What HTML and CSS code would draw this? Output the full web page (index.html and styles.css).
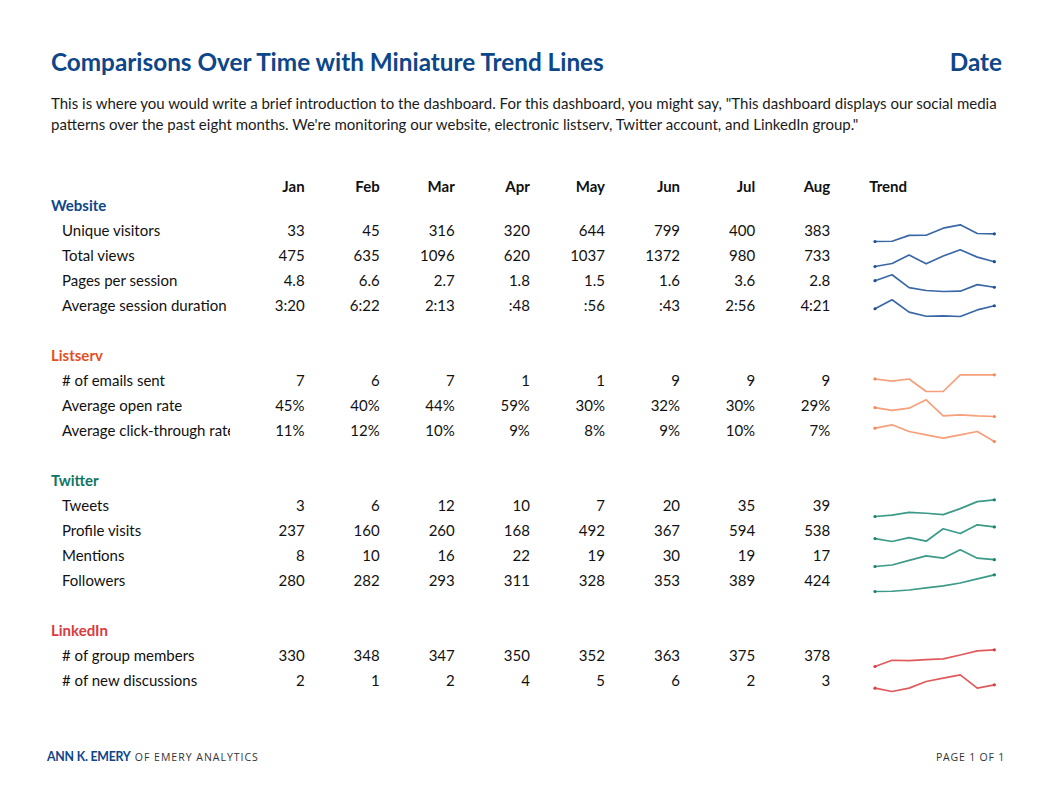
FILE: index.html
```html
<!DOCTYPE html>
<html lang="en">
<head>
<meta charset="utf-8">
<title>Comparisons Over Time with Miniature Trend Lines</title>
<link rel="stylesheet" href="styles.css">
</head>
<body>
<div class="page">
  <header class="top">
    <h1 class="title">Comparisons Over Time with Miniature Trend Lines</h1>
    <div class="date">Date</div>
  </header>
  <p class="intro">This is where you would write a brief introduction to the dashboard. For this dashboard, you might say, "This dashboard displays our social media patterns over the past eight months. We're monitoring our website, electronic listserv, Twitter account, and LinkedIn group."</p>

  <div class="grid">
    <div class="hd"></div>
    <div class="hd num">Jan</div><div class="hd num">Feb</div><div class="hd num">Mar</div><div class="hd num">Apr</div><div class="hd num">May</div><div class="hd num">Jun</div><div class="hd num">Jul</div><div class="hd num">Aug</div>
    <div class="hd trend">Trend</div>

    <div class="sec web">Website</div>

    <div class="lab">Unique visitors</div>
    <div class="num">33</div><div class="num">45</div><div class="num">316</div><div class="num">320</div><div class="num">644</div><div class="num">799</div><div class="num">400</div><div class="num">383</div>
    <div class="trend"><svg class="spark blue" width="130" height="25"><polyline points="6,23.5 23.05,23.24 40.1,17.33 57.15,17.24 74.2,10.18 91.25,6.8 108.3,15.5 125.35,15.87"/><circle cx="6" cy="23.5" r="1.6"/><circle cx="125.35" cy="15.87" r="1.6"/></svg></div>

    <div class="lab">Total views</div>
    <div class="num">475</div><div class="num">635</div><div class="num">1096</div><div class="num">620</div><div class="num">1037</div><div class="num">1372</div><div class="num">980</div><div class="num">733</div>
    <div class="trend"><svg class="spark blue" width="130" height="25"><polyline points="6,23.5 23.05,20.52 40.1,11.94 57.15,20.8 74.2,13.04 91.25,6.8 108.3,14.1 125.35,18.7"/><circle cx="6" cy="23.5" r="1.6"/><circle cx="125.35" cy="18.7" r="1.6"/></svg></div>

    <div class="lab">Pages per session</div>
    <div class="num">4.8</div><div class="num">6.6</div><div class="num">2.7</div><div class="num">1.8</div><div class="num">1.5</div><div class="num">1.6</div><div class="num">3.6</div><div class="num">2.8</div>
    <div class="trend"><svg class="spark blue" width="130" height="25"><polyline points="6,12.69 23.05,6.8 40.1,19.57 57.15,22.52 74.2,23.5 91.25,23.17 108.3,16.62 125.35,19.24"/><circle cx="6" cy="12.69" r="1.6"/><circle cx="125.35" cy="19.24" r="1.6"/></svg></div>

    <div class="lab">Average session duration</div>
    <div class="num">3:20</div><div class="num">6:22</div><div class="num">2:13</div><div class="num">:48</div><div class="num">:56</div><div class="num">:43</div><div class="num">2:56</div><div class="num">4:21</div>
    <div class="trend"><svg class="spark blue" width="130" height="25"><polyline points="6,15.77 23.05,6.8 40.1,19.07 57.15,23.25 74.2,22.86 91.25,23.5 108.3,16.95 125.35,12.76"/><circle cx="6" cy="15.77" r="1.6"/><circle cx="125.35" cy="12.76" r="1.6"/></svg></div>

    <div class="gap"></div>

    <div class="sec lst">Listserv</div>

    <div class="lab"># of emails sent</div>
    <div class="num">7</div><div class="num">6</div><div class="num">7</div><div class="num">1</div><div class="num">1</div><div class="num">9</div><div class="num">9</div><div class="num">9</div>
    <div class="trend"><svg class="spark orange" width="130" height="25"><polyline points="6,10.97 23.05,13.06 40.1,10.97 57.15,23.5 74.2,23.5 91.25,6.8 108.3,6.8 125.35,6.8"/><circle cx="6" cy="10.97" r="1.6"/><circle cx="125.35" cy="6.8" r="1.6"/></svg></div>

    <div class="lab">Average open rate</div>
    <div class="num">45%</div><div class="num">40%</div><div class="num">44%</div><div class="num">59%</div><div class="num">30%</div><div class="num">32%</div><div class="num">30%</div><div class="num">29%</div>
    <div class="trend"><svg class="spark orange" width="130" height="25"><polyline points="6,14.59 23.05,17.38 40.1,15.15 57.15,6.8 74.2,22.94 91.25,21.83 108.3,22.94 125.35,23.5"/><circle cx="6" cy="14.59" r="1.6"/><circle cx="125.35" cy="23.5" r="1.6"/></svg></div>

    <div class="lab">Average click-through rate</div>
    <div class="num">11%</div><div class="num">12%</div><div class="num">10%</div><div class="num">9%</div><div class="num">8%</div><div class="num">9%</div><div class="num">10%</div><div class="num">7%</div>
    <div class="trend"><svg class="spark orange" width="130" height="25"><polyline points="6,10.14 23.05,6.8 40.1,13.48 57.15,16.82 74.2,20.16 91.25,16.82 108.3,13.48 125.35,23.5"/><circle cx="6" cy="10.14" r="1.6"/><circle cx="125.35" cy="23.5" r="1.6"/></svg></div>

    <div class="gap"></div>

    <div class="sec twt">Twitter</div>

    <div class="lab">Tweets</div>
    <div class="num">3</div><div class="num">6</div><div class="num">12</div><div class="num">10</div><div class="num">7</div><div class="num">20</div><div class="num">35</div><div class="num">39</div>
    <div class="trend"><svg class="spark teal" width="130" height="25"><polyline points="6,23.5 23.05,22.11 40.1,19.33 57.15,20.25 74.2,21.64 91.25,15.61 108.3,8.66 125.35,6.8"/><circle cx="6" cy="23.5" r="1.6"/><circle cx="125.35" cy="6.8" r="1.6"/></svg></div>

    <div class="lab">Profile visits</div>
    <div class="num">237</div><div class="num">160</div><div class="num">260</div><div class="num">168</div><div class="num">492</div><div class="num">367</div><div class="num">594</div><div class="num">538</div>
    <div class="trend"><svg class="spark teal" width="130" height="25"><polyline points="6,20.54 23.05,23.5 40.1,19.65 57.15,23.19 74.2,10.72 91.25,15.53 108.3,6.8 125.35,8.95"/><circle cx="6" cy="20.54" r="1.6"/><circle cx="125.35" cy="8.95" r="1.6"/></svg></div>

    <div class="lab">Mentions</div>
    <div class="num">8</div><div class="num">10</div><div class="num">16</div><div class="num">22</div><div class="num">19</div><div class="num">30</div><div class="num">19</div><div class="num">17</div>
    <div class="trend"><svg class="spark teal" width="130" height="25"><polyline points="6,23.5 23.05,21.98 40.1,17.43 57.15,12.87 74.2,15.15 91.25,6.8 108.3,15.15 125.35,16.67"/><circle cx="6" cy="23.5" r="1.6"/><circle cx="125.35" cy="16.67" r="1.6"/></svg></div>

    <div class="lab">Followers</div>
    <div class="num">280</div><div class="num">282</div><div class="num">293</div><div class="num">311</div><div class="num">328</div><div class="num">353</div><div class="num">389</div><div class="num">424</div>
    <div class="trend"><svg class="spark teal" width="130" height="25"><polyline points="6,23.5 23.05,23.27 40.1,21.99 57.15,19.9 74.2,17.93 91.25,15.03 108.3,10.86 125.35,6.8"/><circle cx="6" cy="23.5" r="1.6"/><circle cx="125.35" cy="6.8" r="1.6"/></svg></div>

    <div class="gap"></div>

    <div class="sec lnk">LinkedIn</div>

    <div class="lab"># of group members</div>
    <div class="num">330</div><div class="num">348</div><div class="num">347</div><div class="num">350</div><div class="num">352</div><div class="num">363</div><div class="num">375</div><div class="num">378</div>
    <div class="trend"><svg class="spark red" width="130" height="25"><polyline points="6,23.5 23.05,17.24 40.1,17.58 57.15,16.54 74.2,15.85 91.25,12.02 108.3,7.84 125.35,6.8"/><circle cx="6" cy="23.5" r="1.6"/><circle cx="125.35" cy="6.8" r="1.6"/></svg></div>

    <div class="lab"># of new discussions</div>
    <div class="num">2</div><div class="num">1</div><div class="num">2</div><div class="num">4</div><div class="num">5</div><div class="num">6</div><div class="num">2</div><div class="num">3</div>
    <div class="trend"><svg class="spark red" width="130" height="25"><polyline points="6,20.16 23.05,23.5 40.1,20.16 57.15,13.48 74.2,10.14 91.25,6.8 108.3,20.16 125.35,16.82"/><circle cx="6" cy="20.16" r="1.6"/><circle cx="125.35" cy="16.82" r="1.6"/></svg></div>
  </div>
</div>
<footer class="foot">
  <div class="brand"><span class="brand-name">ANN K. EMERY</span> <span class="brand-of">OF EMERY ANALYTICS</span></div>
  <div class="pageno">PAGE 1 OF 1</div>
</footer>
</body>
</html>
```
FILE: styles.css
```css
* { box-sizing: border-box; }
html, body { margin: 0; padding: 0; background: #ffffff; }
body {
  font-family: Lato, "Liberation Sans", sans-serif;
  color: #1b1b1b;
  width: 1052px;
  height: 811px;
  overflow: hidden;
}
.page {
  padding: 47px 50px 0 51px;
}
.top {
  display: flex;
  justify-content: space-between;
  align-items: baseline;
}
.title, .date {
  margin: 0;
  font-size: 24.3px;
  line-height: 29px;
  font-weight: 700;
  color: #0d4689;
}
.intro {
  margin: 17px 0 0 0;
  font-size: 15px;
  line-height: 21px;
  color: #1b1b1b;
}
.grid {
  margin-top: 33px;
  display: grid;
  grid-template-columns: 178.5px repeat(8, 75.1px) 1fr;
  grid-auto-rows: 25px;
  font-size: 15px;
  line-height: 25px;
  color: #111111;
}
.hd {
  font-weight: 700;
  line-height: 14px;
  padding-top: 11px;
  color: #111111;
}
.num { text-align: right; white-space: nowrap; }
.trend { padding-left: 39px; }
.sec {
  grid-column: 1 / -1;
  font-weight: 700;
}
.web { color: #0d4689; }
.lst { color: #e2501c; }
.twt { color: #0e7563; }
.lnk { color: #d93b3f; }
.gap { grid-column: 1 / -1; }
.lab {
  padding-left: 11px;
  white-space: nowrap;
  overflow: hidden;
}
.spark { display: block; overflow: visible; }
.spark polyline {
  fill: none;
  stroke-width: 1.7;
  stroke-linejoin: round;
  stroke-linecap: round;
}
.blue polyline { stroke: #3a68a6; }
.blue circle { fill: #1f4f8f; }
.orange polyline { stroke: #f5a07a; }
.orange circle { fill: #f08a5a; }
.teal polyline { stroke: #3b9a88; }
.teal circle { fill: #1f7f6d; }
.red polyline { stroke: #e05a5d; }
.red circle { fill: #d63f43; }
.foot {
  margin-top: 52px;
  padding: 0 47px 0 47px;
  display: flex;
  justify-content: space-between;
  align-items: baseline;
}
.brand-name {
  font-size: 12.3px;
  font-weight: 700;
  color: #0d4689;
  letter-spacing: -0.2px;
}
.brand-of {
  font-family: "Open Sans", Lato, sans-serif;
  font-size: 10.5px;
  color: #333333;
  letter-spacing: 1px;
}
.pageno {
  font-family: "Open Sans", Lato, sans-serif;
  font-size: 10.5px;
  color: #333333;
  letter-spacing: 0.8px;
}
```
